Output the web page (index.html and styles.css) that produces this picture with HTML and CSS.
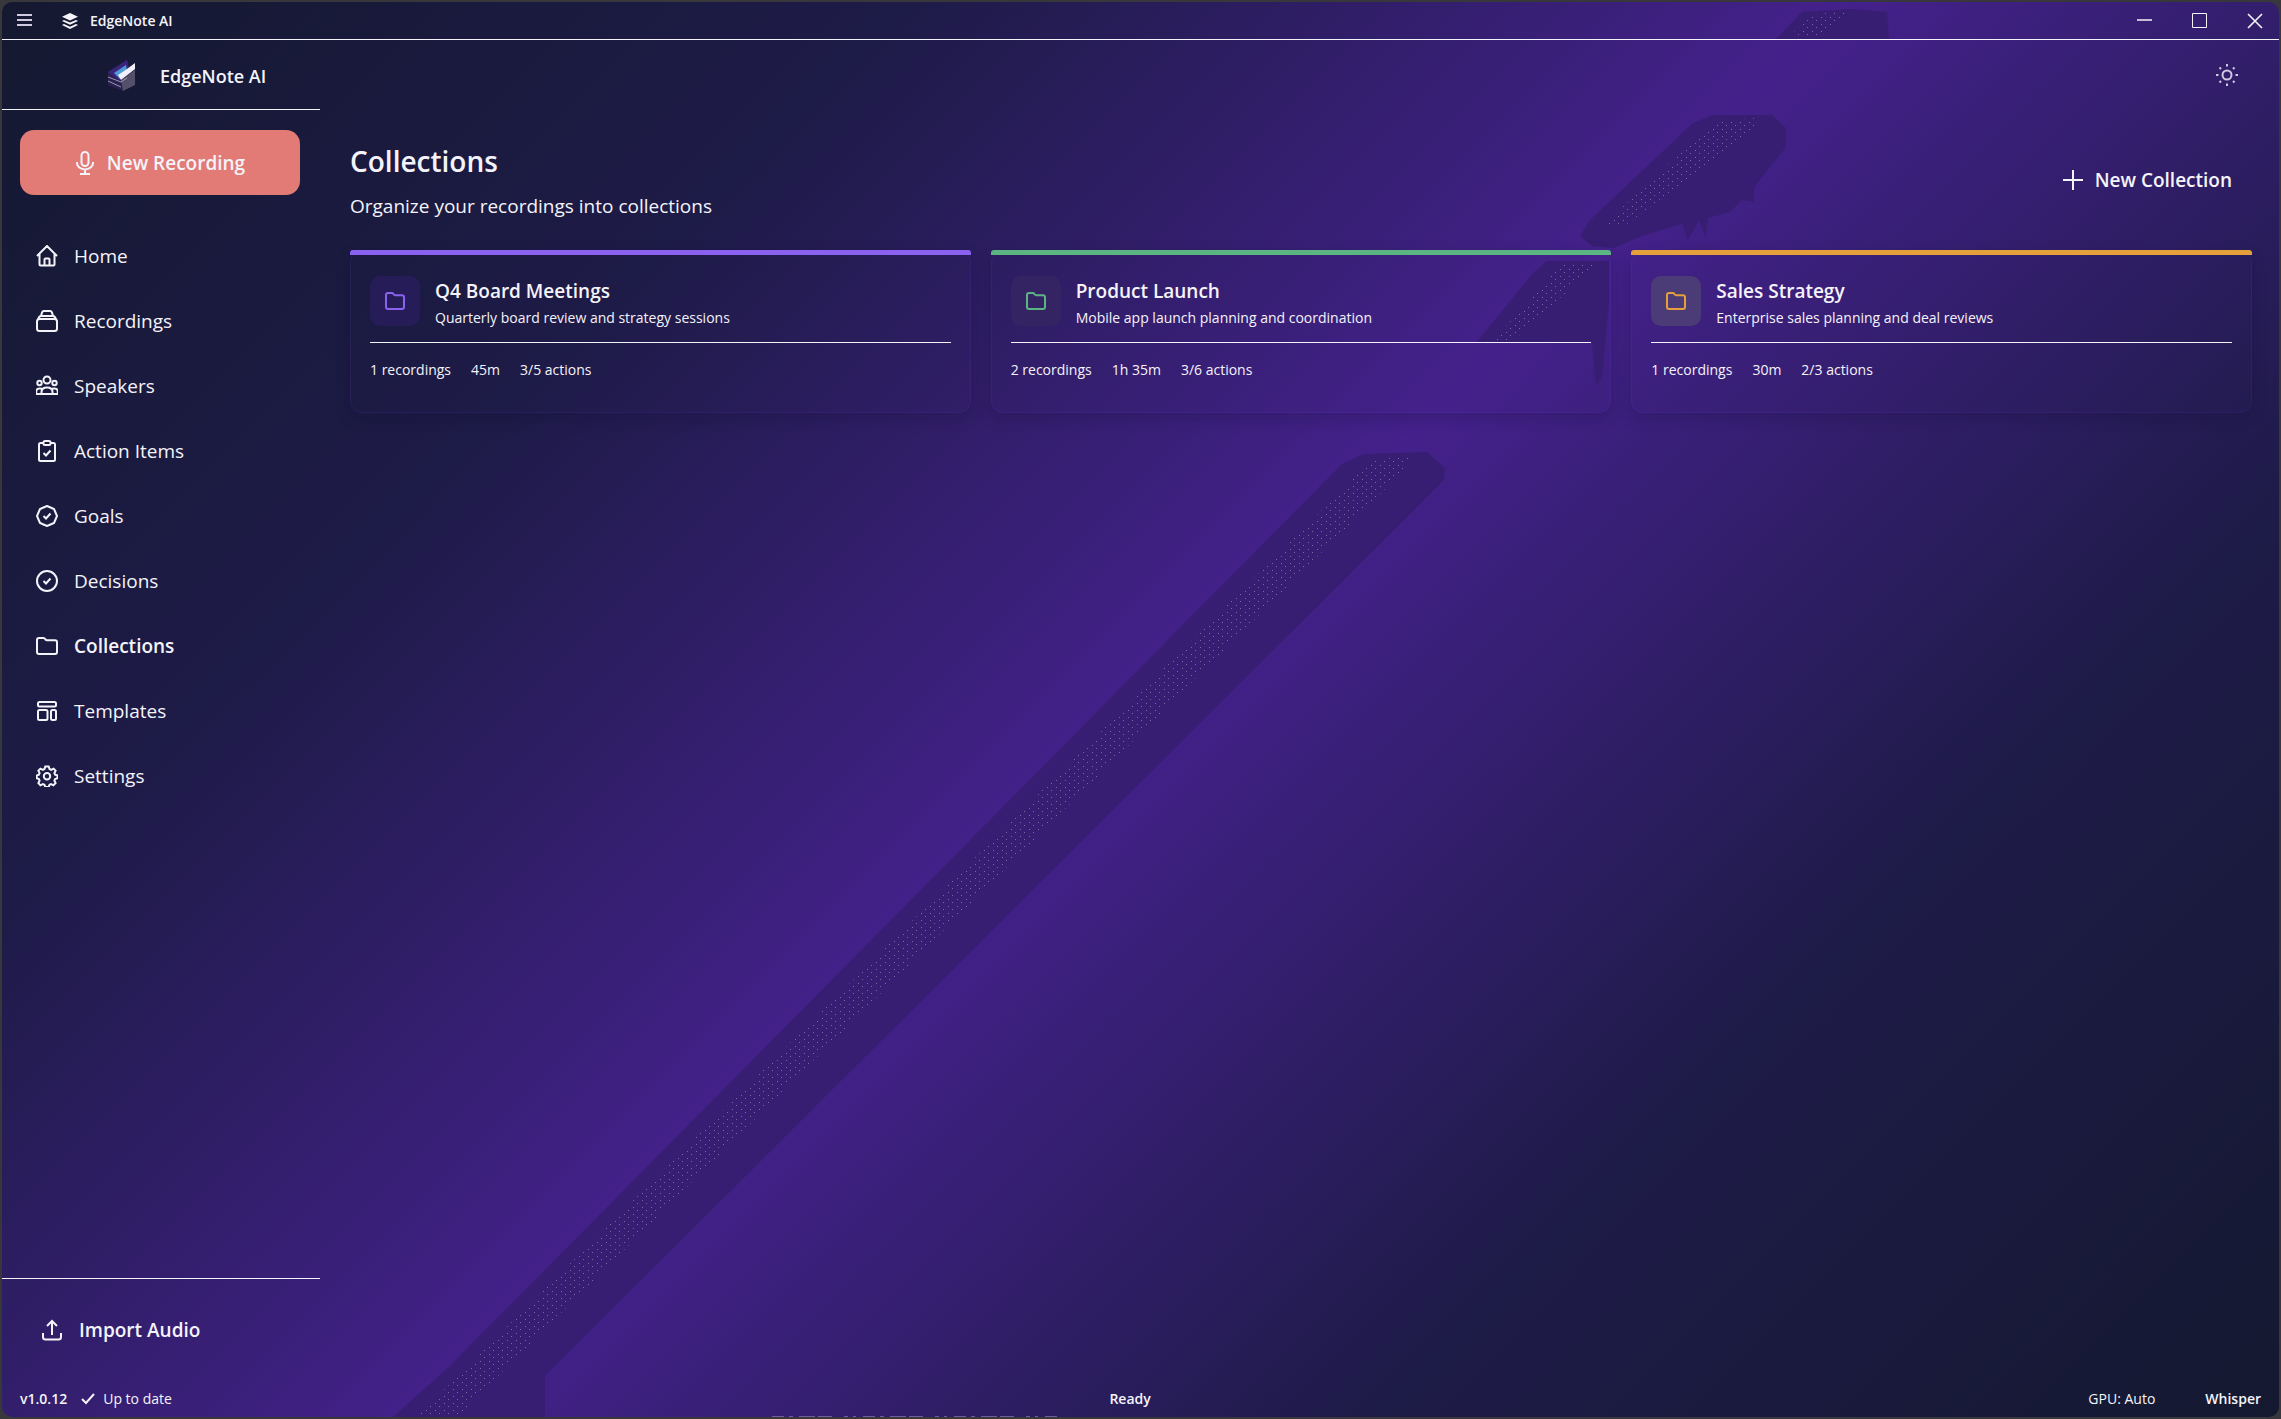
FILE: index.html
```html
<!DOCTYPE html>
<html lang="en">
<head>
    <meta charset="UTF-8">
    <title>EdgeNote AI</title>
    <meta name="viewport" content="width=device-width, initial-scale=1.0">
    <link rel="stylesheet" href="styles.css">
</head>
<body>
    <div class="window">
        <!-- Background streaks -->
        <svg class="backdrop" viewBox="0 0 2277 1415" preserveAspectRatio="none" aria-hidden="true">
            <defs>
                <pattern id="dots" width="9" height="7" patternUnits="userSpaceOnUse">
                    <rect x="1" y="1" width="1" height="1" fill="#7a6a9c"/>
                    <rect x="5" y="4" width="1" height="1" fill="#7a6a9c"/>
                </pattern>
            </defs>
            <g fill="#371e72">
                <path d="M391 1415 L448 1364 L1340 462 L1362 452 L1425 450 L1443 466 L1442 478 L543 1374 V1415Z"/>
                <path d="M1578 234 L1588 218 L1690 122 L1710 113 H1770 L1784 126 V145 L1752 185 V200 L1740 198 L1728 210 L1706 216 L1704 236 L1697 218 L1686 238 L1680 222 L1640 234 L1612 246 L1590 244Z"/>
                <path d="M1774 37 L1800 10 L1850 7 L1885 10 L1887 37Z"/>
                <path d="M1475 340 L1530 272 L1545 259 H1607 V300 L1600 375 L1594 384 L1590 340Z"/>
            </g>
            <g fill="url(#dots)">
                <path d="M415 1415 L1370 458 L1410 454 L1400 470 L455 1415Z"/>
                <path d="M1600 224 L1715 118 L1760 116 L1745 132 L1625 222Z"/>
                <path d="M1790 32 L1812 12 L1850 9 L1815 35Z"/>
                <path d="M1490 340 L1560 262 H1595 L1510 340Z"/>
            </g>
            <path d="M770 1414.500H1060" stroke="#705e9a" stroke-width="1" stroke-dasharray="12 5 4 6 16 3 14 12 4 5 3 7"/>
        </svg>

        <!-- Title bar -->
        <header class="title-bar">
            <button class="title-menu" aria-label="Menu">
                <svg width="16" height="16" viewBox="0 0 16 16"><path d="M0 2h15M0 7h15M0 12h15" stroke-width="2"/></svg>
            </button>
            <svg class="title-icon" width="16" height="16" viewBox="0 0 16 16"><path d="M8 0l8 3.800-8 3.800-8-3.800zM2 6.900l6 2.700 6-2.700 2 1.100-8 3.800L0 8zM2 11l6 2.700L14 11l2 1-8 4-8-4z"/></svg>
            <span class="title-text">EdgeNote AI</span>
            <div class="window-controls">
                <button aria-label="Minimize"><svg width="16" height="16" viewBox="0 0 16 16"><path d="M0 7h15" stroke-width="2" opacity=".75"/></svg></button>
                <button aria-label="Maximize"><svg width="16" height="16" viewBox="0 0 16 16"><path d="M.5.5h14v14h-14z"/></svg></button>
                <button aria-label="Close"><svg width="16" height="16" viewBox="0 0 16 16"><path d="M1 1l14 14M15 1L1 15" stroke-width="1.600"/></svg></button>
            </div>
        </header>

        <div class="layout">
            <!-- Sidebar -->
            <aside class="sidebar">
                <div class="brand">
                    <svg width="28" height="32" viewBox="0 0 28 32">
                        <path d="M0 12L19 0l2 8 6-5v21L15 31 0 25z" fill="#28204e"/>
                        <path d="M0 12L19 0l2 9-9 12z" fill="#3b247d"/>
                        <path d="M6 13l12-8 1 6-7 8z" fill="#4b9bd4"/>
                        <path d="M10 15l9-6 8-6v6L13 20z" fill="#f2f0fa"/>
                        <path d="M13 20l14-10v15l-12 6z" fill="#55506a"/>
                        <path d="M0 17l13 5 6-4M0 21l13 6" fill="none" stroke="#9d97b3" stroke-width="1"/>
                    </svg>
                    <span>EdgeNote AI</span>
                </div>

                <button class="record-btn">
                    <svg width="20" height="24" viewBox="0 0 20 24"><rect x="6.500" y="1" width="7" height="14" rx="3.500"/><path d="M2 11v1a8 6.500 0 0 0 16 0v-1M10 18.500V23M5 23h10"/></svg>
                    New Recording
                </button>

                <nav class="nav">
                    <a href="#home"><svg viewBox="0 0 22 22"><path d="M1 11L11 1l10 10M3.500 9v10.500q0 1 1 1h13q1 0 1-1V9M8.500 20v-5.500q0-1 1-1h3q1 0 1 1V20"/></svg>Home</a>
                    <a href="#recordings"><svg viewBox="0 0 22 22"><rect x="1" y="9" width="20" height="12" rx="2.500"/><path d="M2 9.500Q3 6 5 6h12q2 0 3 3.500M5 6l1-3.500Q6.500 1 8 1h6q1.500 0 2 1.500L17 6"/></svg>Recordings</a>
                    <a href="#speakers"><svg viewBox="0 0 22 22"><circle cx="11" cy="5" r="3.500"/><circle cx="3.500" cy="8" r="2.200"/><circle cx="18.500" cy="8" r="2.200"/><path d="M5.500 19v-2q0-4.500 5.500-4.500t5.500 4.500v2zM6 13.800Q.2 12.500.2 17v2h5.300M16 13.800q5.800-1.300 5.800 3.200v2h-5.300"/></svg>Speakers</a>
                    <a href="#actions"><svg viewBox="0 0 22 22"><path d="M7.500 3H4.500Q3 3 3 4.500v15Q3 21 4.500 21h13q1.500 0 1.500-1.500v-15Q19 3 17.500 3h-3"/><rect x="7.500" y="1" width="7" height="4" rx="1.500"/><path d="M7.500 13l2.500 2.500 4.500-5"/></svg>Action Items</a>
                    <a href="#goals"><svg viewBox="0 0 22 22"><path d="M11 1l3.500 1.500 3.500 1.500 1.500 3.500L21 11l-1.500 3.500L18 18l-3.500 1.500L11 21l-3.500-1.500L4 18l-1.500-3.500L1 11l1.500-3.500L4 4l3.500-1.500zM7.500 11l2.500 2.500 4.500-5"/></svg>Goals</a>
                    <a href="#decisions"><svg viewBox="0 0 22 22"><circle cx="11" cy="11" r="10"/><path d="M7.500 11l2.500 2.500 4.500-5"/></svg>Decisions</a>
                    <a href="#collections" class="active"><svg viewBox="0 0 22 22"><path d="M1 5Q1 3 3 3h4.500q1 0 2 1.500 .6.700 1.500.700h8q2 0 2 2V17q0 2-2 2H3q-2 0-2-2z"/></svg>Collections</a>
                    <a href="#templates"><svg viewBox="0 0 22 22"><rect x="2" y="2" width="18" height="4.500" rx="1.500"/><rect x="2" y="10" width="9.500" height="10" rx="1.500"/><rect x="15" y="10" width="5" height="10" rx="1.500"/></svg>Templates</a>
                    <a href="#settings"><svg viewBox="0 0 22 22"><path d="M9.300 1.500h3.400l.8 2.500 1.700.8 2.400-1.200 2 2-1.200 2.400.7 1.700 2.400.8v2.600l-2.400.9-.7 1.700 1.200 2.400-2.200 2.200-2.300-1.200-1.600.7-.8 2.200H9.300l-.8-2.200-1.700-.7-2.400 1.200-2-2.200 1.200-2.400-.7-1.700-2.200-.9v-2.600l2.200-.8.7-1.700-1.200-2.400 2-2 2.400 1.200 1.700-.8z"/><circle cx="11" cy="11.300" r="3.200"/></svg>Settings</a>
                </nav>

                <div class="sidebar-footer">
                    <button class="import-btn">
                        <svg width="22" height="22" viewBox="0 0 22 22"><path d="M11 16V2M6 7l5-5 5 5M2 14v4q0 2.500 2.500 2.500h13q2.500 0 2.500-2.500v-4"/></svg>
                        Import Audio
                    </button>
                </div>
            </aside>

            <!-- Main content -->
            <main class="main">
                <div class="top-row">
                    <button class="theme-toggle" aria-label="Toggle theme">
                        <svg width="22" height="22" viewBox="0 0 22 22"><circle cx="11" cy="11" r="4.500"/><path d="M11 0v2.500M11 19.500V22M0 11h2.500M19.500 11H22M3.500 3.500L5 5M17 17l1.500 1.500M3.500 18.500L5 17M17 5l1.500-1.500"/></svg>
                    </button>
                </div>

                <div class="page-header">
                    <div>
                        <h1>Collections</h1>
                        <p>Organize your recordings into collections</p>
                    </div>
                    <button class="new-btn">
                        <svg width="20" height="20" viewBox="0 0 20 20"><path d="M10 0v20M0 10h20"/></svg>
                        New Collection
                    </button>
                </div>

                <div class="cards">
                    <article class="card purple">
                        <div class="card-head">
                            <div class="card-icon"><svg width="22" height="22" viewBox="0 0 22 22"><path d="M2 5Q2 3 4 3h4q1 0 1.800 1.500 .5.700 1.400.700H18q2 0 2 2V17q0 2-2 2H4q-2 0-2-2z"/></svg></div>
                            <div>
                                <h2>Q4 Board Meetings</h2>
                                <p>Quarterly board review and strategy sessions</p>
                            </div>
                        </div>
                        <div class="card-meta"><span>1 recordings</span><span>45m</span><span>3/5 actions</span></div>
                    </article>
                    <article class="card green">
                        <div class="card-head">
                            <div class="card-icon"><svg width="22" height="22" viewBox="0 0 22 22"><path d="M2 5Q2 3 4 3h4q1 0 1.800 1.500 .5.700 1.400.700H18q2 0 2 2V17q0 2-2 2H4q-2 0-2-2z"/></svg></div>
                            <div>
                                <h2>Product Launch</h2>
                                <p>Mobile app launch planning and coordination</p>
                            </div>
                        </div>
                        <div class="card-meta"><span>2 recordings</span><span>1h 35m</span><span>3/6 actions</span></div>
                    </article>
                    <article class="card orange">
                        <div class="card-head">
                            <div class="card-icon"><svg width="22" height="22" viewBox="0 0 22 22"><path d="M2 5Q2 3 4 3h4q1 0 1.800 1.500 .5.700 1.400.700H18q2 0 2 2V17q0 2-2 2H4q-2 0-2-2z"/></svg></div>
                            <div>
                                <h2>Sales Strategy</h2>
                                <p>Enterprise sales planning and deal reviews</p>
                            </div>
                        </div>
                        <div class="card-meta"><span>1 recordings</span><span>30m</span><span>2/3 actions</span></div>
                    </article>
                </div>
            </main>
        </div>

        <!-- Status bar -->
        <footer class="status-bar">
            <div class="status-left">
                <strong>v1.0.12</strong>
                <svg width="14" height="12" viewBox="0 0 14 12"><path d="M1 6l4 4 8-9"/></svg>
                <span>Up to date</span>
            </div>
            <strong>Ready</strong>
            <div class="status-right">
                <span>GPU: Auto</span>
                <strong>Whisper</strong>
            </div>
        </footer>
    </div>
</body>
</html>
```
FILE: styles.css
```css
:root {
    --text: #f5f3fa;
    --muted: #cfcadf;
    --line: #f5f3fa;
    --record: #e27a75;
    --purple: #8b62f0;
    --green: #5bb583;
    --orange: #e59f3b;
}

* {
    box-sizing: border-box;
}

body {
    margin: 0;
    min-height: 100vh;
    display: flex;
    padding: 2px;
    background: #38383c;
    font-family: 'Segoe UI', 'Open Sans', 'Noto Sans', sans-serif;
    font-size: 19px;
    line-height: 24px;
    color: var(--text);
}

h1, h2, p {
    margin: 0;
}

button {
    margin: 0;
    padding: 0;
    background: none;
    border: none;
    font: inherit;
    color: inherit;
    cursor: pointer;
}

svg {
    display: block;
    flex: none;
    fill: none;
    stroke: currentColor;
}

.window {
    position: relative;
    flex: 1;
    display: flex;
    flex-direction: column;
    border-radius: 10px;
    overflow: hidden;
    background: linear-gradient(135deg, #141930 0%, #1e1b48 25%, #44218b 50%, #1e1b48 75%, #141930 100%);
}

.backdrop {
    position: absolute;
    inset: 0;
    width: 100%;
    height: 100%;
    stroke: none;
}

.title-bar,
.layout,
.status-bar {
    position: relative;
}

/* Title bar */
.title-bar {
    display: flex;
    align-items: center;
    height: 38px;
    padding: 0 16px 0 15px;
    border-bottom: 1px solid var(--line);
}

.title-menu {
    color: var(--muted);
}

.title-icon {
    margin: 0 12px 0 29px;
    fill: var(--text);
    stroke: none;
}

.title-text {
    font-size: 14px;
    font-weight: 600;
}

.window-controls {
    display: flex;
    gap: 39px;
    margin-left: auto;
}

/* Sidebar */
.layout {
    flex: 1;
    display: flex;
}

.sidebar {
    width: 318px;
    flex: none;
    display: flex;
    flex-direction: column;
}

.brand {
    display: flex;
    align-items: center;
    gap: 24px;
    height: 70px;
    padding: 2px 0 0 106px;
    border-bottom: 1px solid var(--line);
    font-size: 18px;
    font-weight: 600;
}

.brand svg {
    stroke: none;
}

.record-btn {
    display: flex;
    align-items: center;
    justify-content: center;
    gap: 12px;
    height: 65px;
    margin: 20px 20px 28px 18px;
    background: var(--record);
    border-radius: 14px;
    font-weight: 600;
}

.record-btn svg,
.nav svg,
.import-btn svg {
    stroke-width: 2;
}

.nav {
    display: flex;
    flex-direction: column;
}

.nav a {
    display: flex;
    align-items: center;
    gap: 16px;
    height: 65px;
    padding-left: 34px;
    color: inherit;
    text-decoration: none;
}

.nav svg {
    width: 22px;
    height: 22px;
}

.nav .active {
    font-weight: 600;
}

.sidebar-footer {
    margin-top: auto;
    padding: 39px 0 37px 39px;
    border-top: 1px solid var(--line);
}

.import-btn {
    display: flex;
    align-items: center;
    gap: 16px;
    font-weight: 600;
}

/* Main */
.main {
    flex: 1;
    padding: 0 27px 0 30px;
}

.top-row {
    display: flex;
    align-items: center;
    justify-content: flex-end;
    height: 70px;
    padding-right: 14px;
}

.theme-toggle {
    color: var(--muted);
}

.theme-toggle svg {
    stroke-width: 2;
}

.page-header {
    display: flex;
    align-items: center;
    justify-content: space-between;
    height: 140px;
    padding-right: 20px;
}

.page-header h1 {
    margin-bottom: 15px;
    font-size: 28px;
    line-height: 36px;
    font-weight: 600;
}

.new-btn {
    display: flex;
    align-items: center;
    gap: 12px;
    font-weight: 600;
}

.new-btn svg {
    stroke-width: 2;
}

.cards {
    display: grid;
    grid-template-columns: repeat(3, 1fr);
    gap: 20px;
}

.card {
    position: relative;
    padding: 25px 19px 30px;
    border: 1px solid rgba(124, 58, 237, 0.12);
    border-radius: 12px;
    box-shadow: 0 5px 16px rgba(10, 10, 40, 0.2);
}

/* Colour strip along the top edge */
.card::before {
    content: "";
    position: absolute;
    top: -1px;
    left: -1px;
    right: -1px;
    height: 5px;
    border-radius: 3px 3px 0 0;
    background: var(--accent);
}

.purple {
    --accent: var(--purple);
    --tile: #261c58;
}

.green {
    --accent: var(--green);
    --tile: #352463;
}

.orange {
    --accent: var(--orange);
    --tile: #4b3b76;
}

.card-head {
    display: flex;
    gap: 15px;
    padding-bottom: 12px;
    border-bottom: 1px solid var(--line);
}

.card-icon {
    display: flex;
    align-items: center;
    justify-content: center;
    width: 50px;
    height: 50px;
    border-radius: 10px;
    background: var(--tile);
    color: var(--accent);
}

.card-icon svg {
    stroke-width: 2;
}

.card h2 {
    font-size: 19px;
    line-height: 30px;
    font-weight: 600;
}

.card p {
    font-size: 14px;
    line-height: 24px;
}

.card-meta {
    display: flex;
    gap: 20px;
    padding-top: 15px;
    font-size: 14px;
}

/* Status bar */
.status-bar {
    display: flex;
    align-items: center;
    justify-content: space-between;
    height: 38px;
    padding: 2px 18px 0;
    font-size: 14px;
}

.status-bar strong {
    font-weight: 600;
}

.status-left,
.status-right {
    display: flex;
    align-items: center;
}

.status-left {
    gap: 8px;
}

.status-left svg {
    margin-left: 6px;
    stroke-width: 2;
}

.status-right {
    justify-content: flex-end;
    gap: 50px;
}
```
